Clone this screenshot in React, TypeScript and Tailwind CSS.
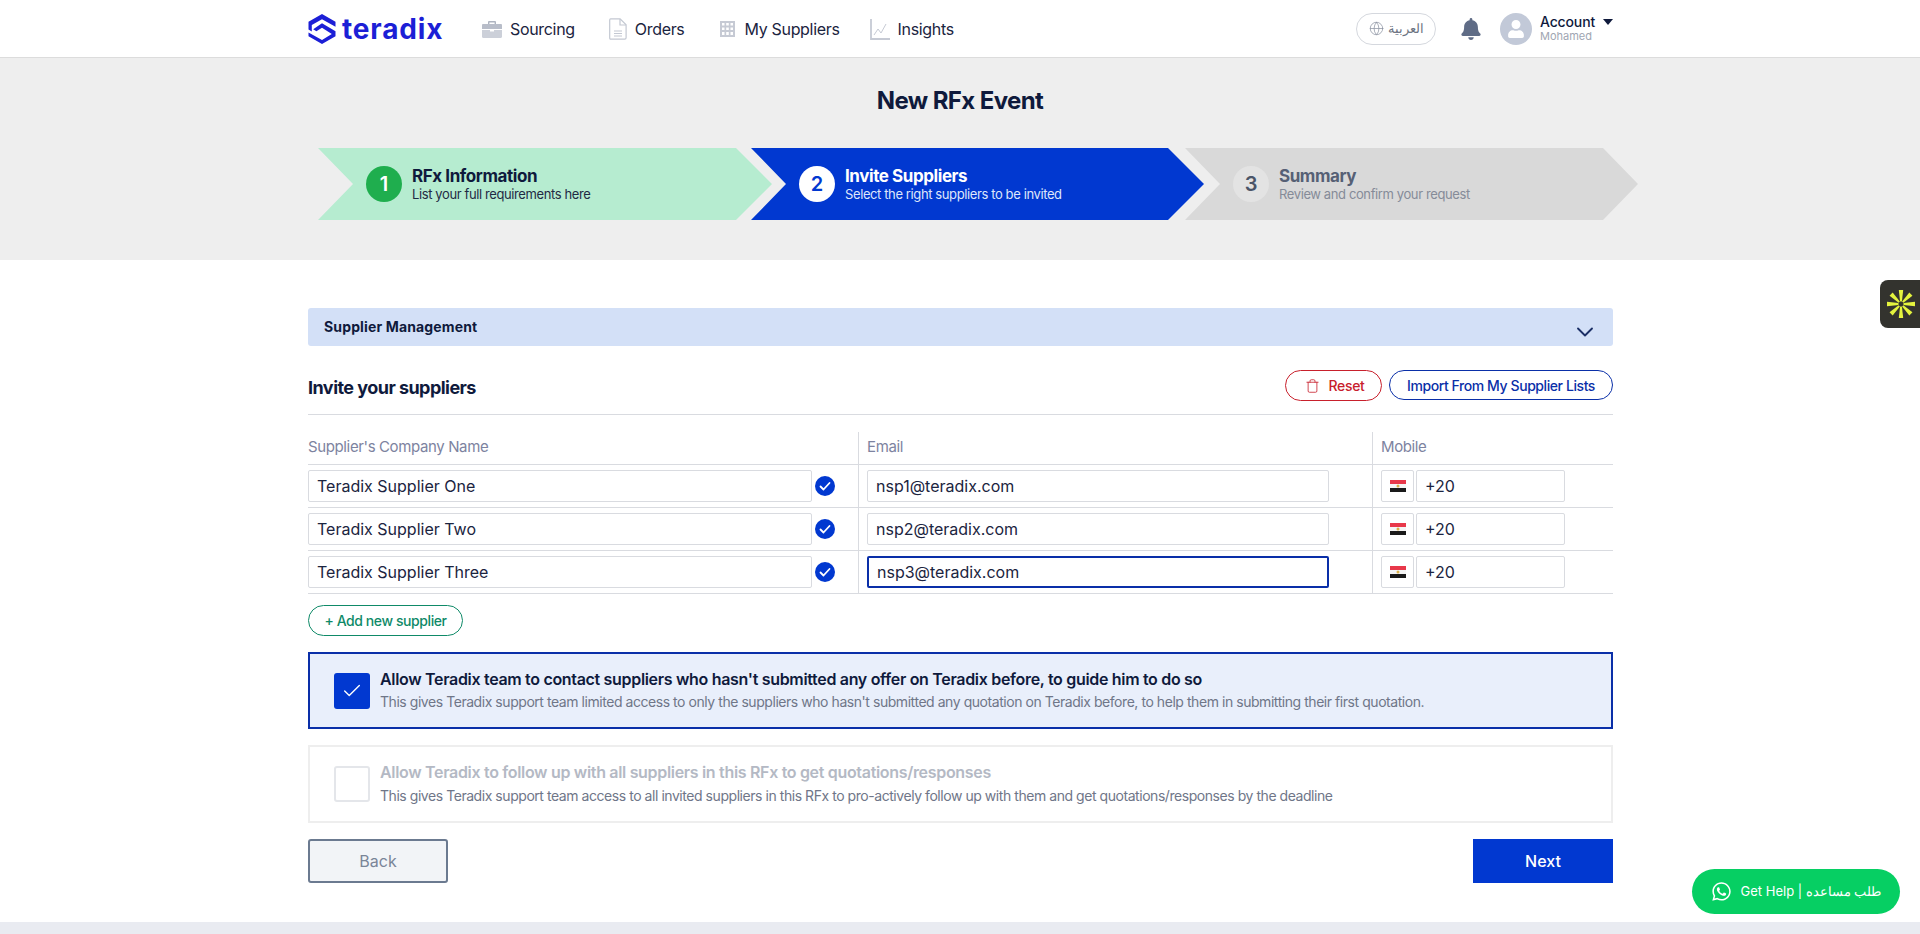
import { Globe, ChevronDown, Trash, Check } from 'lucide-react';
import { FaBell, FaWhatsapp, FaUser } from 'react-icons/fa';

const navItems = [
    { label: 'Sourcing', icon: <BriefcaseIcon />, gap: 'ml-0' },
    { label: 'Orders', icon: <DocIcon />, gap: 'ml-[34px]' },
    { label: 'My Suppliers', icon: <BuildingIcon />, gap: 'ml-[35px]' },
    { label: 'Insights', icon: <ChartIcon />, gap: 'ml-[30px]' },
];

const suppliers = [
    { name: 'Teradix Supplier One', email: 'nsp1@teradix.com' },
    { name: 'Teradix Supplier Two', email: 'nsp2@teradix.com' },
    { name: 'Teradix Supplier Three', email: 'nsp3@teradix.com', focused: true },
];

function BriefcaseIcon() {
    return (
        <svg width="20" height="18" viewBox="0 0 20 18" className="shrink-0">
            <path d="M6 4V2.2C6 1.5 6.5 1 7.2 1h5.6c.7 0 1.2.5 1.2 1.2V4h-1.4V2.4H7.4V4z" fill="#aeb4c0" />
            <path d="M1.2 4h17.6c.7 0 1.2.5 1.2 1.2V9H0V5.2C0 4.5.5 4 1.2 4z" fill="#b8bdc9" />
            <path d="M0 10h8v1.4h4V10h8v6.8c0 .7-.5 1.2-1.2 1.2H1.2C.5 18 0 17.500 0 16.800z" fill="#ccd0d9" />
        </svg>
    );
}

function DocIcon() {
    return (
        <svg width="18" height="22" viewBox="0 0 18 22" className="shrink-0" fill="none" stroke="#c3c8d2" strokeWidth="1.200">
            <path d="M1.600 .8h9.500l6 6v13c0 .8-.5 1.400-1.300 1.400H1.600c-.5 0-.9-.6-.9-1.400V2c0-.7.4-1.200.9-1.200z" />
            <path d="M11 1v6h6" />
            <path d="M5 13h8M5 15.500h8M5 18h8" />
        </svg>
    );
}

function BuildingIcon() {
    return (
        <svg width="17" height="18" viewBox="0 0 17 18" className="shrink-0" fill="#c6cad4">
            <path d="M1 1h15v16H1zM3 3v2.500h2.500V3zm4.200 0v2.500h2.600V3zm4.300 0v2.500H14V3zM3 7.500V10h2.500V7.500zm4.200 0V10h2.600V7.500zm4.300 0V10H14V7.500zM3 12v3h2.500v-3zm4.200 0v3h2.600v-3zm4.300 0v3H14v-3z" fillRule="evenodd" />
        </svg>
    );
}

function ChartIcon() {
    return (
        <svg width="20" height="21" viewBox="0 0 20 21" className="shrink-0" fill="none">
            <path d="M1 0v20h19" stroke="#c6cad4" strokeWidth="1.800" />
            <path d="M4 16l4-6 3 4 5-9" stroke="#c6cad4" strokeWidth="1" />
        </svg>
    );
}

function LogoMark() {
    return (
        <svg width="28" height="30" viewBox="0 0 28 30" className="shrink-0" fill="#1c1fd6">
            <path d="M14 0L27.500 7.800V12.800L14 5.200L3.800 11V17.400L0.500 15.500V7.800z" />
            <path d="M14 9.200L27.500 17.200V22.200L14 30L0.500 22.200V18.400L14 26L23.800 20L14 13.800L8.400 17.200L5.200 15.300z" />
        </svg>
    );
}

function EgyptFlag() {
    return (
        <svg width="16" height="12" viewBox="0 0 16 12">
            <rect width="16" height="4" fill="#e8384a" />
            <rect y="4" width="16" height="4" fill="#f5f5f5" />
            <rect y="8" width="16" height="4" fill="#1a1a1a" />
            <circle cx="8" cy="6" r="1.500" fill="#d9b04a" />
        </svg>
    );
}

function VerifiedBadge() {
    return (
        <svg width="20" height="20" viewBox="0 0 20 20" className="shrink-0">
            <circle cx="10" cy="10" r="10" fill="#0138d0" />
            <path d="M5.500 10.500l3 3 6-6.500" fill="none" stroke="#fff" strokeWidth="1.800" strokeLinecap="round" strokeLinejoin="round" />
        </svg>
    );
}

function SparkIcon() {
    const spoke = 'M11.800 0h4.400L14.900 11.500h-1.800z';
    return (
        <svg width="28" height="28" viewBox="0 0 28 28" fill="#e4f33e">
            {[0, 45, 90, 135, 180, 225, 270, 315].map((a) => (
                <path key={a} d={spoke} transform={`rotate(${a} 14 14)`} />
            ))}
        </svg>
    );
}

const Header = () => (
    <header className="h-[58px] bg-white border-b border-[#dcdcdc]">
        <div className="ml-[308px] w-[1305px] h-[57px] flex items-center">
            <div className="flex items-center w-[174px]">
                <LogoMark />
                <span className="ml-[6px] text-[28px] font-bold leading-none tracking-[0.03em] text-[#1c1fd6]">teradix</span>
            </div>
            <nav className="flex items-center pt-[1px]">
                {navItems.map((n) => (
                    <a key={n.label} className={`flex items-center gap-[8px] text-[16px] tracking-[-0.02em] text-[#1b2440] ${n.gap}`}>
                        {n.icon}
                        <span>{n.label}</span>
                    </a>
                ))}
            </nav>
            <div className="ml-auto flex items-center">
                <div className="w-[80px] h-[32px] rounded-full border border-[#d5d8de] flex items-center justify-center gap-[4px] text-[13px] text-[#6c7482]">
                    <Globe className="w-[15px] h-[15px] text-[#8d94a3]" strokeWidth={1.200} />
                    <span>العربية</span>
                </div>
                <FaBell className="ml-[25px] w-[20px] h-[22px] text-[#5f6c86]" />
                <div className="ml-[19px] w-[32px] h-[32px] rounded-full bg-[#c2c9d8] flex items-center justify-center overflow-hidden">
                    <FaUser className="w-[18px] h-[18px] text-white" />
                </div>
                <div className="ml-[8px] w-[73px]">
                    <div className="flex items-center justify-between text-[14px] leading-[16px] font-medium tracking-[-0.01em] text-[#0f1a3c]">
                        <span>Account</span>
                        <span className="w-0 h-0 border-x-[5px] border-x-transparent border-t-[6px] border-t-[#0f1a3c]" />
                    </div>
                    <div className="text-[11px] leading-[13px] text-[#a0a6b2]">Mohamed</div>
                </div>
            </div>
        </div>
    </header>
);

const Stepper = () => (
    <section className="h-[202px] bg-[#eeeeee] pt-[28px]">
        <h1 className="text-center text-[24px] leading-[30px] font-bold tracking-[-0.025em] text-[#0f1a3c]">New RFx Event</h1>
        <div className="ml-[318px] mt-[32px] flex">
            <div className="w-[454px] h-[72px] bg-[#b6ecd0] [clip-path:polygon(0_0,418px_0,454px_50%,418px_100%,0_100%,35px_50%)] flex items-center pl-[48px]">
                <div className="w-[36px] h-[36px] rounded-full bg-[#1fae4e] text-white flex items-center justify-center text-[20px] font-semibold">1</div>
                <div className="ml-[10px]">
                    <div className="text-[17px] leading-[20px] font-bold tracking-[-0.025em] text-[#0f1a3c]">RFx Information</div>
                    <div className="text-[13px] leading-[16px] tracking-[-0.03em] text-[#1f2a44]">List your full requirements here</div>
                </div>
            </div>
            <div className="-ml-[21px] w-[453px] h-[72px] bg-[#0138d0] [clip-path:polygon(0_0,417px_0,453px_50%,417px_100%,0_100%,35px_50%)] flex items-center pl-[48px]">
                <div className="w-[36px] h-[36px] rounded-full bg-white text-[#0138d0] flex items-center justify-center text-[20px] font-semibold">2</div>
                <div className="ml-[10px]">
                    <div className="text-[17px] leading-[20px] font-bold tracking-[-0.025em] text-white">Invite Suppliers</div>
                    <div className="text-[13px] leading-[16px] tracking-[-0.03em] text-[#dfe6fb]">Select the right suppliers to be invited</div>
                </div>
            </div>
            <div className="-ml-[19px] w-[453px] h-[72px] bg-[#d9d9d9] [clip-path:polygon(0_0,418px_0,453px_50%,418px_100%,0_100%,35px_50%)] flex items-center pl-[48px]">
                <div className="w-[36px] h-[36px] rounded-full bg-[#e3e3e3] text-[#4b5568] flex items-center justify-center text-[20px] font-semibold">3</div>
                <div className="ml-[10px]">
                    <div className="text-[17px] leading-[20px] font-bold tracking-[-0.025em] text-[#566075]">Summary</div>
                    <div className="text-[13px] leading-[16px] tracking-[-0.03em] text-[#858b98]">Review and confirm your request</div>
                </div>
            </div>
        </div>
    </section>
);

const SupplierRow = ({ name, email, focused }: { name: string; email: string; focused?: boolean }) => (
    <div className="flex h-[43px] border-b border-[#d9dbe0]">
        <div className="w-[551px] flex items-center border-r border-[#d9dbe0]">
            <div className="w-[504px] h-[32px] border border-[#d9dbe0] rounded-[2px] pl-[8px] flex items-center text-[16px] text-[#1b2440]">{name}</div>
            <div className="ml-[3px]"><VerifiedBadge /></div>
        </div>
        <div className="w-[514px] pl-[8px] flex items-center border-r border-[#d9dbe0]">
            <div className={`w-[462px] h-[32px] rounded-[2px] pl-[8px] flex items-center text-[16px] text-[#1b2440] ${focused ? 'border-2 border-[#0a2fa8] pl-[7px]' : 'border border-[#d9dbe0]'}`}>{email}</div>
        </div>
        <div className="pl-[8px] flex items-center gap-[2px]">
            <div className="w-[33px] h-[32px] border border-[#d9dbe0] rounded-[2px] flex items-center justify-center"><EgyptFlag /></div>
            <div className="w-[149px] h-[32px] border border-[#d9dbe0] rounded-[2px] pl-[8px] flex items-center text-[16px] text-[#1b2440]">+20</div>
        </div>
    </div>
);

const App = () => {
    return (
        <div className="relative min-h-[934px] bg-white font-['Inter','Noto_Sans',sans-serif] overflow-hidden">
            <Header />
            <Stepper />
            <main className="ml-[308px] w-[1305px] pt-[48px]">
                <div className="h-[38px] bg-[#d3e0f7] rounded-[3px] flex items-center justify-between pl-[16px] pr-[14px]">
                    <span className="text-[14px] font-bold tracking-[0.01em] text-[#0f1a3c] -mt-[2px]">Supplier Management</span>
                    <ChevronDown className="w-[28px] h-[28px] text-[#1b2f66] mt-[10px]" strokeWidth={1.600} />
                </div>

                <div className="h-[69px] flex items-start justify-between pt-[24px] border-b border-[#d9dbe0]">
                    <h2 className="mt-[3px] text-[18px] leading-[30px] font-bold tracking-[-0.03em] text-[#0f1a3c]">Invite your suppliers</h2>
                    <div className="flex gap-[7px]">
                        <button className="w-[97px] h-[31px] pl-[3px] rounded-full border border-[#c8202c] text-[#c8202c] flex items-center justify-center gap-[8px] text-[14px] font-medium tracking-[-0.02em]">
                            <Trash className="w-[15px] h-[16px]" strokeWidth={1.300} />
                            Reset
                        </button>
                        <button className="w-[224px] h-[30px] rounded-full border border-[#0a2fa8] text-[#0a2fa8] flex items-center justify-center text-[14px] font-medium tracking-[-0.03em]">Import From My Supplier Lists</button>
                    </div>
                </div>

                <div className="flex h-[50px] border-b border-[#d9dbe0] text-[15px] tracking-[-0.025em] text-[#7d83a0]">
                    <div className="w-[551px] mt-[17px] pb-[2px] border-r border-[#d9dbe0] flex items-center">Supplier's Company Name</div>
                    <div className="w-[514px] mt-[17px] pb-[2px] pl-[8px] border-r border-[#d9dbe0] flex items-center">Email</div>
                    <div className="mt-[17px] pb-[2px] pl-[8px] flex items-center">Mobile</div>
                </div>
                {suppliers.map((s) => (
                    <SupplierRow key={s.name} {...s} />
                ))}

                <button className="mt-[11px] w-[155px] h-[31px] rounded-full border border-[#0f8a68] text-[#0f8a68] flex items-center justify-center text-[14px] font-medium tracking-[-0.03em]">+ Add new supplier</button>

                <div className="mt-[16px] h-[77px] border-2 border-[#0a2fa8] bg-[#e9effb] flex items-center pl-[24px]">
                    <div className="w-[36px] h-[36px] rounded-[3px] bg-[#0138d0] flex items-center justify-center shrink-0">
                        <Check className="w-[22px] h-[22px] text-white" strokeWidth={1.500} />
                    </div>
                    <div className="ml-[10px]">
                        <div className="text-[16px] leading-[20px] font-semibold tracking-[-0.02em] text-[#0f1a3c]">Allow Teradix team to contact suppliers who hasn't submitted any offer on Teradix before, to guide him to do so</div>
                        <div className="mt-[3px] text-[14px] leading-[20px] tracking-[-0.032em] text-[#6f7688]">This gives Teradix support team limited access to only the suppliers who hasn't submitted any quotation on Teradix before, to help them in submitting their first quotation.</div>
                    </div>
                </div>

                <div className="mt-[16px] h-[78px] border-2 border-[#eeeeee] flex items-center pl-[24px]">
                    <div className="w-[36px] h-[36px] rounded-[3px] border-2 border-[#e4e6ea] shrink-0" />
                    <div className="ml-[10px]">
                        <div className="text-[16px] leading-[20px] font-semibold tracking-[-0.02em] text-[#b4b9c4] -mt-[1px]">Allow Teradix to follow up with all suppliers in this RFx to get quotations/responses</div>
                        <div className="mt-[4px] text-[14px] leading-[20px] tracking-[-0.032em] text-[#6f7688]">This gives Teradix support team access to all invited suppliers in this RFx to pro-actively follow up with them and get quotations/responses by the deadline</div>
                    </div>
                </div>

                <div className="mt-[16px] flex justify-between">
                    <button className="w-[140px] h-[44px] pb-[1px] rounded-[3px] border-2 border-[#6b7a90] bg-[#f2f4f7] text-[16px] text-[#7a8597]">Back</button>
                    <button className="w-[140px] h-[44px] bg-[#0138d0] text-[16px] font-medium text-white">Next</button>
                </div>
            </main>

            <div className="absolute left-0 right-0 top-[922px] h-[12px] bg-[#e9ebf1]" />

            <div className="absolute right-0 top-[280px] w-[40px] h-[48px] rounded-l-[8px] bg-[#33332e] flex items-center justify-center pl-[1px]">
                <SparkIcon />
            </div>

            <button className="absolute left-[1692px] top-[869px] w-[208px] h-[45px] rounded-full bg-[#06cf63] text-white flex items-center justify-center gap-[9px] text-[13px]">
                <FaWhatsapp className="w-[21px] h-[21px]" />
                <span>Get Help | طلب مساعده</span>
            </button>
        </div>
    );
};

export default App;
